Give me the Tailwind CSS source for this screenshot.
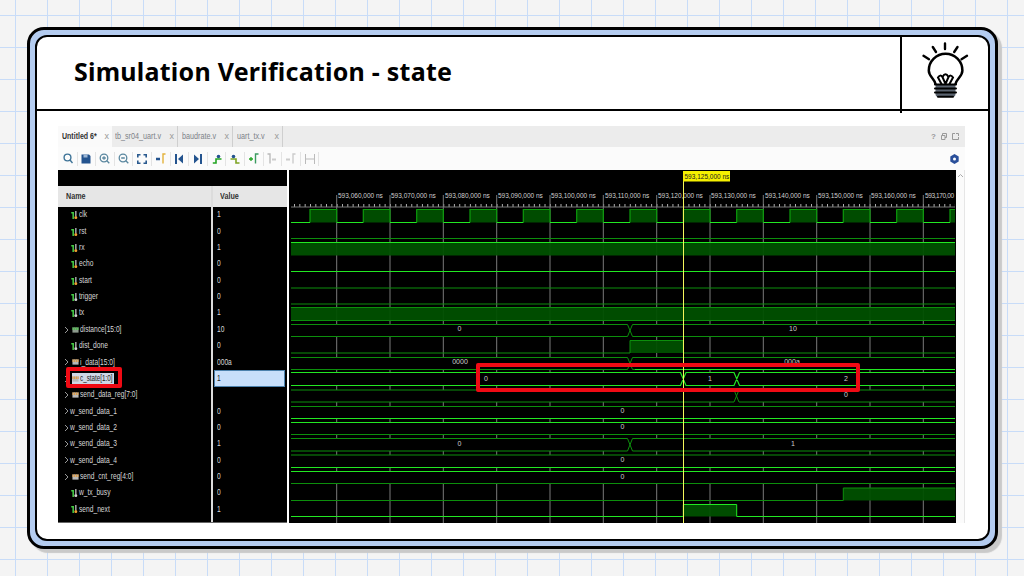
<!DOCTYPE html>
<html>
<head>
<meta charset="utf-8">
<script src="https://cdn.jsdelivr.net/npm/@tailwindcss/browser@4"></script>
</head>
<body class="m-0">
<svg width="0" height="0" class="absolute">
  <defs>
    <symbol id="in" viewBox="0 0 8 10"><path d="M0.3 2.5H2.5V9.5" fill="none" stroke="#46d046" stroke-width="1.7"/><path d="M5.5 0.5V7" stroke="#a8a8a8" stroke-width="1.7"/><circle cx="5.5" cy="8" r="1.7" fill="#f0a030"/></symbol>
    <symbol id="out" viewBox="0 0 8 10"><path d="M0.3 2.5H2.5V9.5" fill="none" stroke="#46d046" stroke-width="1.7"/><path d="M5.5 0.5V7" stroke="#a8a8a8" stroke-width="1.7"/><circle cx="5.5" cy="8" r="1.7" fill="#d0d0d0"/></symbol>
    <symbol id="busg" viewBox="0 0 8 8"><rect x="0.5" y="1" width="7" height="6" fill="#8c9a8c"/><path d="M1 1V4M3 1V4M5 1V4M7 1V4" stroke="#3fc43f" stroke-width="1"/></symbol>
    <symbol id="buso" viewBox="0 0 8 8"><rect x="0.5" y="1" width="7" height="6" fill="#b8b8b8"/><path d="M1 1V4M3 1V4M5 1V4M7 1V4" stroke="#e8962c" stroke-width="1"/></symbol>
  </defs>
</svg>

<div class="relative w-[1024px] h-[576px] overflow-hidden bg-[#f4f4f4] bg-[linear-gradient(#c8dcf8_1px,transparent_1px),linear-gradient(90deg,#c8dcf8_1px,transparent_1px)] bg-[size:32px_32px] bg-[position:15px_15px] pt-[27px] pl-[27px] font-['Liberation_Sans',sans-serif]">

  <!-- card -->
  <div class="w-[971px] h-[522px] rounded-[17px] border-[3px] border-black bg-[#b4ccf0] p-[5px] shadow-[4px_4px_1px_#c9c9c9]">
    <div class="w-full h-full rounded-[12px] border-2 border-black bg-white flex flex-col overflow-hidden">

      <!-- title bar -->
      <div class="relative flex h-[74px] shrink-0 border-b-2 border-black">
        <div class="flex-1 pl-[37px] pt-[16px] text-[25px] leading-[36px] font-bold text-black font-['Noto_Sans',sans-serif] tracking-[0.24px]">Simulation Verification - state</div>
        <div class="w-[88px] shrink-0 border-l-2 border-black flex items-start justify-center pt-[3px]">
          <svg width="50" height="64" viewBox="920 40 50 64" fill="none" stroke="#000" stroke-linecap="round">
            <path d="M945 43.5V49M932.8 47L936 52M957.5 47L954.2 52M923.5 55.8L929 59.2M967 55.8L961.5 59.2" stroke-width="2.4"/>
            <path d="M935.5 84C934 78 928.8 76.5 928.8 70.5A16.8 16.8 0 0 1 962.4 70.5C962.4 76.5 957 78 955.5 84" stroke-width="2.5"/>
            <path d="M941.5 84L938 77.5Q940 74 942.5 77L945.5 84L948.5 77Q951 74 953 77.5L949.5 84M942.5 77Q945.5 71.5 948.5 77" stroke-width="2"/>
            <rect x="935.5" y="84" width="20" height="13" rx="3" fill="#5b6470" stroke="none"/>
            <path d="M935 84.5H956M935 88.5H956M935 92.5H956M938 96.8H953" stroke-width="2"/>
          </svg>
        </div>
        <div class="absolute left-[863px] bottom-[-4px] w-[2px] h-[4px] bg-black"></div>
      </div>

      <!-- content -->
      <div class="pl-[21px] pt-[15px]">
        <div class="w-[907px] h-[397px] flex flex-col bg-[#fbfbfb]">

          <!-- tabs -->
          <div class="flex items-stretch h-[21px] shrink-0 bg-[#ececec] text-[9px] text-[#7c8288]">
            <div class="w-[54px] bg-[#fafafa] flex items-center justify-between pl-[4px] pr-[3px] font-bold text-[#333]"><span class="text-[#999] text-[9px] leading-none font-normal order-2">x</span><span class="inline-block origin-left scale-x-[0.78] w-[36px] whitespace-nowrap">Untitled 6*</span></div>
            <div class="w-[66px] pl-[3px] flex items-center justify-between border-r border-[#cfcfcf] pr-[3px]"><span class="text-[#999] text-[9px] leading-none order-2">x</span><span class="inline-block origin-left scale-x-[0.8] w-[50px] whitespace-nowrap">tb_sr04_uart.v</span></div>
            <div class="w-[55px] pl-[4px] flex items-center justify-between border-r border-[#cfcfcf] pr-[3px]"><span class="text-[#999] text-[9px] leading-none order-2">x</span><span class="inline-block origin-left scale-x-[0.8] w-[38px] whitespace-nowrap">baudrate.v</span></div>
            <div class="w-[50px] pl-[4px] flex items-center justify-between border-r border-[#cfcfcf] pr-[3px]"><span class="text-[#999] text-[9px] leading-none order-2">x</span><span class="inline-block origin-left scale-x-[0.8] w-[30px] whitespace-nowrap">uart_tx.v</span></div>
            <div class="flex-1"></div>
            <div class="flex items-center gap-[5px] pr-[6px] text-[#999]">
              <span class="text-[8px] font-bold leading-none">?</span>
              <svg width="6" height="7" viewBox="0 0 6 7" fill="none" stroke="#999"><path d="M1.5 2.5V.5H5.5V4.5H4M.5 2.5H4V6.5H.5Z"/></svg>
              <svg width="7" height="7" viewBox="0 0 7 7" fill="none" stroke="#999"><path d="M3 .5H.5V6.5H6.5V4M4 .5H6.5V3"/></svg>
            </div>
          </div>

          <!-- toolbar -->
          <div class="flex items-center h-[23px] shrink-0 bg-[#fbfbfb] pl-[1px] pr-[6px]">
            <div class="w-[18.6px] h-[14px] flex items-center justify-center border-r border-[#e4e4e4]"><svg width="10" height="11" viewBox="0 0 10 11" fill="none" stroke="#3f7498" stroke-width="1.4"><circle cx="4.5" cy="4.5" r="3.4"/><path d="M7 7L9.5 10"/></svg></div>
            <div class="w-[18.6px] h-[14px] flex items-center justify-center border-r border-[#e4e4e4]"><svg width="10" height="10" viewBox="0 0 10 10"><path d="M.5.5H8L9.5 2V9.5H.5Z" fill="#24548f"/><rect x="2.5" y=".5" width="4" height="3" fill="#9db7d6"/></svg></div>
            <div class="w-[18.6px] h-[14px] flex items-center justify-center border-r border-[#e4e4e4]"><svg width="11" height="11" viewBox="0 0 11 11" fill="none" stroke="#5a879f" stroke-width="1.3"><circle cx="5" cy="5" r="3.8"/><path d="M7.8 7.8L10.3 10.3M3.2 5H6.8M5 3.2V6.8"/></svg></div>
            <div class="w-[18.6px] h-[14px] flex items-center justify-center border-r border-[#e4e4e4]"><svg width="11" height="11" viewBox="0 0 11 11" fill="none" stroke="#5a879f" stroke-width="1.3"><circle cx="5" cy="5" r="3.8"/><path d="M7.8 7.8L10.3 10.3M3.2 5H6.8"/></svg></div>
            <div class="w-[18.6px] h-[14px] flex items-center justify-center border-r border-[#e4e4e4]"><svg width="10" height="10" viewBox="0 0 10 10" fill="none" stroke="#2a5a8f" stroke-width="1.6"><path d="M.8 3.5V.8H3.5M6.5.8H9.2V3.5M.8 6.5V9.2H3.5M6.5 9.2H9.2V6.5"/></svg></div>
            <div class="w-[18.6px] h-[14px] flex items-center justify-center border-r border-[#e4e4e4]"><svg width="10" height="11" viewBox="0 0 10 11" fill="none"><path d="M0 6H4" stroke="#24548f" stroke-width="2.4"/><path d="M9.5 1H7V10.5" stroke="#e3b23c" stroke-width="1.4"/></svg></div>
            <div class="w-[18.6px] h-[14px] flex items-center justify-center border-r border-[#e4e4e4]"><svg width="8" height="10" viewBox="0 0 8 10"><rect x="0" y="0" width="2" height="10" fill="#24548f"/><path d="M8 .5V9.5L3 5Z" fill="#24548f"/></svg></div>
            <div class="w-[18.6px] h-[14px] flex items-center justify-center border-r border-[#e4e4e4]"><svg width="8" height="10" viewBox="0 0 8 10"><rect x="6" y="0" width="2" height="10" fill="#24548f"/><path d="M0 .5V9.5L5 5Z" fill="#24548f"/></svg></div>
            <div class="w-[18.6px] h-[14px] flex items-center justify-center border-r border-[#e4e4e4]"><svg width="10" height="10" viewBox="0 0 10 10" fill="none"><path d="M.8 9H4V5H9.5" stroke="#22a522" stroke-width="1.6"/><circle cx="6.5" cy="2.5" r="1.8" fill="#24548f"/></svg></div>
            <div class="w-[18.6px] h-[14px] flex items-center justify-center border-r border-[#e4e4e4]"><svg width="10" height="10" viewBox="0 0 10 10" fill="none"><path d="M.5 5H6V9H9.5" stroke="#7ea422" stroke-width="1.6"/><circle cx="3.5" cy="2.5" r="1.8" fill="#24548f"/></svg></div>
            <div class="w-[18.6px] h-[14px] flex items-center justify-center border-r border-[#e4e4e4]"><svg width="10" height="11" viewBox="0 0 10 11" fill="none"><path d="M0 6H4M2 4V8" stroke="#22a522" stroke-width="1.3"/><path d="M9.5 1H6.5V10.5" stroke="#3a9a60" stroke-width="1.4"/></svg></div>
            <div class="w-[18.6px] h-[14px] flex items-center justify-center border-r border-[#e4e4e4]"><svg width="10" height="11" viewBox="0 0 10 11" fill="none"><path d="M.5 1H3V10.5" stroke="#bbb" stroke-width="1.4"/><path d="M5 6.5H9" stroke="#ccc" stroke-width="2"/></svg></div>
            <div class="w-[18.6px] h-[14px] flex items-center justify-center border-r border-[#e4e4e4]"><svg width="10" height="11" viewBox="0 0 10 11" fill="none"><path d="M9.5 1H7V10.5" stroke="#ccc" stroke-width="1.4"/><path d="M0 6.5H4" stroke="#ccc" stroke-width="2"/></svg></div>
            <div class="w-[18.6px] h-[14px] flex items-center justify-center border-r border-[#e4e4e4]"><svg width="10" height="10" viewBox="0 0 10 10" fill="none" stroke="#bbb"><path d="M.5 0V10M9.5 0V10M1 5H9"/></svg></div>
            <div class="flex-1"></div>
            <svg width="9" height="10" viewBox="0 0 9 10"><path d="M4.5 0L8.7 2.5V7.5L4.5 10L.3 7.5V2.5Z" fill="#2a4f9a"/><circle cx="4.5" cy="5" r="1.5" fill="#fff"/></svg>
          </div>

          <!-- wave window -->
          <div class="flex flex-1 min-h-0 bg-black">
            <!-- name + value -->
            <div class="w-[229px] shrink-0 flex flex-col border-b border-[#666]">
              <div class="h-[16px] shrink-0"></div>
              <div class="flex flex-1 min-h-0">
                <div class="w-[153px] shrink-0 flex flex-col text-[9px] text-[#d8d8d8] whitespace-nowrap">
                  <div class="h-[21px] shrink-0 bg-[#e6e6e6] flex items-center pl-[8px] font-bold text-[#333]"><span class="inline-block origin-left scale-x-[0.8]">Name</span></div>
                  <div class="h-[16.35px] flex items-center pl-[13px] gap-[1px]"><svg width="7" height="10"><use href="#in"/></svg><span class="inline-block origin-left scale-x-[0.74]">clk</span></div>
                  <div class="h-[16.35px] flex items-center pl-[13px] gap-[1px]"><svg width="7" height="10"><use href="#in"/></svg><span class="inline-block origin-left scale-x-[0.74]">rst</span></div>
                  <div class="h-[16.35px] flex items-center pl-[13px] gap-[1px]"><svg width="7" height="10"><use href="#in"/></svg><span class="inline-block origin-left scale-x-[0.74]">rx</span></div>
                  <div class="h-[16.35px] flex items-center pl-[13px] gap-[1px]"><svg width="7" height="10"><use href="#in"/></svg><span class="inline-block origin-left scale-x-[0.74]">echo</span></div>
                  <div class="h-[16.35px] flex items-center pl-[13px] gap-[1px]"><svg width="7" height="10"><use href="#in"/></svg><span class="inline-block origin-left scale-x-[0.74]">start</span></div>
                  <div class="h-[16.35px] flex items-center pl-[13px] gap-[1px]"><svg width="7" height="10"><use href="#out"/></svg><span class="inline-block origin-left scale-x-[0.74]">trigger</span></div>
                  <div class="h-[16.35px] flex items-center pl-[13px] gap-[1px]"><svg width="7" height="10"><use href="#out"/></svg><span class="inline-block origin-left scale-x-[0.74]">tx</span></div>
                  <div class="h-[16.35px] flex items-center pl-[5px] gap-[1px]"><svg width="7" height="8" viewBox="0 0 7 8" fill="none" stroke="#999" stroke-width="1"><path d="M2 1L5 4L2 7"/></svg><svg width="7" height="8" class="ml-[1px]"><use href="#busg"/></svg><span class="inline-block origin-left scale-x-[0.74]">distance[15:0]</span></div>
                  <div class="h-[16.35px] flex items-center pl-[13px] gap-[1px]"><svg width="7" height="10"><use href="#out"/></svg><span class="inline-block origin-left scale-x-[0.74]">dist_done</span></div>
                  <div class="h-[16.35px] flex items-center pl-[5px] gap-[1px]"><svg width="7" height="8" viewBox="0 0 7 8" fill="none" stroke="#999" stroke-width="1"><path d="M2 1L5 4L2 7"/></svg><svg width="7" height="8" class="ml-[1px]"><use href="#buso"/></svg><span class="inline-block origin-left scale-x-[0.74]">i_data[15:0]</span></div>
                  <div class="h-[16.35px] flex items-center pl-[5px] gap-[1px]"><svg width="7" height="8" viewBox="0 0 7 8" fill="none" stroke="#999" stroke-width="1"><path d="M2 1L5 4L2 7"/></svg><div class="ml-[1px] flex items-center gap-[1px] h-[12px] w-[42px] bg-[#cfd8e6] text-[#222]"><svg width="7" height="8" class="shrink-0"><use href="#buso"/></svg><span class="inline-block origin-left scale-x-[0.7]">c_state[1:0]</span></div></div>
                  <div class="h-[16.35px] flex items-center pl-[5px] gap-[1px]"><svg width="7" height="8" viewBox="0 0 7 8" fill="none" stroke="#999" stroke-width="1"><path d="M2 1L5 4L2 7"/></svg><svg width="7" height="8" class="ml-[1px]"><use href="#buso"/></svg><span class="inline-block origin-left scale-x-[0.74]">send_data_reg[7:0]</span></div>
                  <div class="h-[16.35px] flex items-center pl-[5px]"><svg width="7" height="8" viewBox="0 0 7 8" fill="none" stroke="#999" stroke-width="1"><path d="M2 1L5 4L2 7"/></svg><span class="inline-block origin-left scale-x-[0.74]">w_send_data_1</span></div>
                  <div class="h-[16.35px] flex items-center pl-[5px]"><svg width="7" height="8" viewBox="0 0 7 8" fill="none" stroke="#999" stroke-width="1"><path d="M2 1L5 4L2 7"/></svg><span class="inline-block origin-left scale-x-[0.74]">w_send_data_2</span></div>
                  <div class="h-[16.35px] flex items-center pl-[5px]"><svg width="7" height="8" viewBox="0 0 7 8" fill="none" stroke="#999" stroke-width="1"><path d="M2 1L5 4L2 7"/></svg><span class="inline-block origin-left scale-x-[0.74]">w_send_data_3</span></div>
                  <div class="h-[16.35px] flex items-center pl-[5px]"><svg width="7" height="8" viewBox="0 0 7 8" fill="none" stroke="#999" stroke-width="1"><path d="M2 1L5 4L2 7"/></svg><span class="inline-block origin-left scale-x-[0.74]">w_send_data_4</span></div>
                  <div class="h-[16.35px] flex items-center pl-[5px] gap-[1px]"><svg width="7" height="8" viewBox="0 0 7 8" fill="none" stroke="#999" stroke-width="1"><path d="M2 1L5 4L2 7"/></svg><svg width="7" height="8" class="ml-[1px]"><use href="#buso"/></svg><span class="inline-block origin-left scale-x-[0.74]">send_cnt_reg[4:0]</span></div>
                  <div class="h-[16.35px] flex items-center pl-[13px] gap-[1px]"><svg width="7" height="10"><use href="#out"/></svg><span class="inline-block origin-left scale-x-[0.74]">w_tx_busy</span></div>
                  <div class="h-[16.35px] flex items-center pl-[13px] gap-[1px]"><svg width="7" height="10"><use href="#in"/></svg><span class="inline-block origin-left scale-x-[0.74]">send_next</span></div>
                </div>
                <div class="w-[2px] shrink-0 bg-[#dcdcdc]"></div>
                <div class="flex-1 flex flex-col text-[9px] text-[#d8d8d8]">
                  <div class="h-[21px] shrink-0 bg-[#e6e6e6] flex items-center pl-[7px] font-bold text-[#333]"><span class="inline-block origin-left scale-x-[0.8]">Value</span></div>
                  <div class="h-[16.35px] flex items-center pl-[4px]"><span class="inline-block origin-left scale-x-[0.74]">1</span></div>
                  <div class="h-[16.35px] flex items-center pl-[4px]"><span class="inline-block origin-left scale-x-[0.74]">0</span></div>
                  <div class="h-[16.35px] flex items-center pl-[4px]"><span class="inline-block origin-left scale-x-[0.74]">1</span></div>
                  <div class="h-[16.35px] flex items-center pl-[4px]"><span class="inline-block origin-left scale-x-[0.74]">0</span></div>
                  <div class="h-[16.35px] flex items-center pl-[4px]"><span class="inline-block origin-left scale-x-[0.74]">0</span></div>
                  <div class="h-[16.35px] flex items-center pl-[4px]"><span class="inline-block origin-left scale-x-[0.74]">0</span></div>
                  <div class="h-[16.35px] flex items-center pl-[4px]"><span class="inline-block origin-left scale-x-[0.74]">1</span></div>
                  <div class="h-[16.35px] flex items-center pl-[4px]"><span class="inline-block origin-left scale-x-[0.74]">10</span></div>
                  <div class="h-[16.35px] flex items-center pl-[4px]"><span class="inline-block origin-left scale-x-[0.74]">0</span></div>
                  <div class="h-[16.35px] flex items-center pl-[4px]"><span class="inline-block origin-left scale-x-[0.74]">000a</span></div>
                  <div class="h-[16.35px] flex items-center ml-[1px] mr-[2px] pl-[2px] bg-[#c8dffa] border border-[#4d82ad] text-[#222]"><span class="inline-block origin-left scale-x-[0.74]">1</span></div>
                  <div class="h-[16.35px]"></div>
                  <div class="h-[16.35px] flex items-center pl-[4px]"><span class="inline-block origin-left scale-x-[0.74]">0</span></div>
                  <div class="h-[16.35px] flex items-center pl-[4px]"><span class="inline-block origin-left scale-x-[0.74]">0</span></div>
                  <div class="h-[16.35px] flex items-center pl-[4px]"><span class="inline-block origin-left scale-x-[0.74]">1</span></div>
                  <div class="h-[16.35px] flex items-center pl-[4px]"><span class="inline-block origin-left scale-x-[0.74]">0</span></div>
                  <div class="h-[16.35px] flex items-center pl-[4px]"><span class="inline-block origin-left scale-x-[0.74]">0</span></div>
                  <div class="h-[16.35px] flex items-center pl-[4px]"><span class="inline-block origin-left scale-x-[0.74]">0</span></div>
                  <div class="h-[16.35px] flex items-center pl-[4px]"><span class="inline-block origin-left scale-x-[0.74]">1</span></div>
                </div>
              </div>
            </div>
            <div class="w-[2px] shrink-0 bg-white"></div>
            <!-- waves -->
            <svg width="667" height="353" viewBox="289 170 667 353" class="shrink-0 block font-['Liberation_Sans',sans-serif]" fill="none">
              <rect x="289" y="170" width="667" height="353" fill="#000"/>
              <!-- ticks -->
              <line x1="294" y1="205.5" x2="955" y2="205.5" stroke="#b0b0b0" stroke-width="3" stroke-dasharray="1 4.33"/>
              <line x1="291" y1="207" x2="955" y2="207" stroke="#777" stroke-width="1"/>
              <!-- grid -->
              <path d="M336.7 195V523M390 195V523M443.3 195V523M496.7 195V523M550 195V523M603.3 195V523M656.7 195V523M710 195V523M763.3 195V523M816.7 195V523M870 195V523M923.3 195V523" stroke="#7a7a7a" stroke-width="1"/>
              <!-- time labels -->
              <g fill="#cfcfcf" font-size="6.5">
                <text x="338" y="198">593,060,000 ns</text>
                <text x="391" y="198">593,070,000 ns</text>
                <text x="445" y="198">593,080,000 ns</text>
                <text x="498" y="198">593,090,000 ns</text>
                <text x="551" y="198">593,100,000 ns</text>
                <text x="605" y="198">593,110,000 ns</text>
                <text x="658" y="198">593,120,000 ns</text>
                <text x="711" y="198">593,130,000 ns</text>
                <text x="765" y="198">593,140,000 ns</text>
                <text x="818" y="198">593,150,000 ns</text>
                <text x="871" y="198">593,160,000 ns</text>
                <text x="925" y="198" textLength="29">593,170,00</text>
              </g>
              <!-- bus row masks -->
              <g fill="#000">
                <rect x="291" y="324.5" width="664" height="12"/>
                <rect x="291" y="357.5" width="664" height="12"/>
                <rect x="291" y="373" width="664" height="12.5"/>
                <rect x="291" y="390" width="664" height="12"/>
                <rect x="291" y="406.5" width="664" height="12"/>
                <rect x="291" y="422.5" width="664" height="12"/>
                <rect x="291" y="438.5" width="664" height="12.5"/>
                <rect x="291" y="455" width="664" height="12.5"/>
                <rect x="291" y="471.5" width="664" height="12"/>
              </g>
              <!-- filled highs -->
              <g fill="#005000" fill-opacity="0.95">
                <rect x="310" y="209.5" width="26.7" height="13"/><rect x="363.3" y="209.5" width="26.7" height="13"/><rect x="416.7" y="209.5" width="26.6" height="13"/><rect x="470" y="209.5" width="26.7" height="13"/><rect x="523.3" y="209.5" width="26.7" height="13"/><rect x="576.7" y="209.5" width="26.6" height="13"/><rect x="630" y="209.5" width="26.7" height="13"/><rect x="683.3" y="209.5" width="26.7" height="13"/><rect x="736.7" y="209.5" width="26.6" height="13"/><rect x="790" y="209.5" width="26.7" height="13"/><rect x="843.3" y="209.5" width="26.7" height="13"/><rect x="896.7" y="209.5" width="26.6" height="13"/><rect x="950" y="209.5" width="5" height="13"/>
                <rect x="291" y="242.5" width="664" height="13"/>
                <rect x="291" y="307.5" width="664" height="13"/>
                <rect x="630" y="340.5" width="53.3" height="12.5"/>
                <rect x="843.3" y="488" width="112" height="12.5"/>
                <rect x="683.3" y="504.5" width="53.4" height="12"/>
              </g>
              <!-- clk -->
              <path d="M310 222.5V209.5H336.7V222.5M363.3 222.5V209.5H390V222.5M416.7 222.5V209.5H443.3V222.5M470 222.5V209.5H496.7V222.5M523.3 222.5V209.5H550V222.5M576.7 222.5V209.5H603.3V222.5M630 222.5V209.5H656.7V222.5M683.3 222.5V209.5H710V222.5M736.7 222.5V209.5H763.3V222.5M790 222.5V209.5H816.7V222.5M843.3 222.5V209.5H870V222.5M896.7 222.5V209.5H923.3V222.5M950 222.5V209.5H955" stroke="#0c9c0c" stroke-width="1.2"/>
              <path d="M291 222.5H310M336.7 222.5H363.3M390 222.5H416.7M443.3 222.5H470M496.7 222.5H523.3M550 222.5H576.7M603.3 222.5H630M656.7 222.5H683.3M710 222.5H736.7M763.3 222.5H790M816.7 222.5H843.3M870 222.5H896.7M923.3 222.5H950" stroke="#22e822" stroke-width="1"/>
              <!-- dim lines -->
              <path d="M291 238.5H955M291 288H955M291 304H955M291 307.5H955M291 320.5H955M291 353H630V340.5H683.3V353H955M291 500.5H843.3V488H955" stroke="#0c8f0c" stroke-width="1"/>
              <!-- bright lines -->
              <path d="M291 242.5H955M291 271.5H955M291 516.5H683.3V504.5H736.7V516.5H955" stroke="#22e822" stroke-width="1"/>
              <!-- buses dim -->
              <path d="M291 324.5H627.5L632.5 336.5H955M291 336.5H627.5L632.5 324.5H955" stroke="#0c8f0c" stroke-width="1"/>
              <path d="M291 357.5H627.5L632.5 369.5H635M291 369.5H627.5L632.5 357.5H955" stroke="#0c8f0c" stroke-width="1"/>
              <path d="M635 369.5H955" stroke="#22e822" stroke-width="1"/>
              <path d="M291 390H734L739 402H955M291 402H734L739 390H955" stroke="#0c8f0c" stroke-width="1"/>
              <path d="M291 406.5H955M291 434.5H955M291 451H627.5M632.5 451H955M291 438.5H627.5L632.5 451M627.5 451L632.5 438.5H955M291 455H955M291 483.5H955" stroke="#0c8f0c" stroke-width="1"/>
              <path d="M291 418.5H955M291 422.5H955M291 467.5H955M291 471.5H955" stroke="#22e822" stroke-width="1"/>
              <!-- c_state -->
              <path d="M291 372.5H680.5L686 385.5H734L739.5 372.5H955M291 385.5H680.5L686 372.5H734L739.5 385.5H955" stroke="#22e822" stroke-width="1.2"/>
              <!-- bus values -->
              <g fill="#cfcfcf" font-size="7" text-anchor="middle">
                <text x="459.5" y="331">0</text><text x="793" y="331">10</text>
                <text x="460" y="364">0000</text><text x="792" y="364">000a</text>
                <text x="486" y="380.5">0</text><text x="710" y="380.5">1</text><text x="846" y="380.5">2</text>
                <text x="846" y="397">0</text>
                <text x="622.5" y="413">0</text>
                <text x="622.5" y="429">0</text>
                <text x="459.5" y="446">0</text><text x="793" y="446">1</text>
                <text x="622.5" y="462">0</text>
                <text x="622.5" y="478.5">0</text>
              </g>
              <!-- cursor -->
              <line x1="683.5" y1="172" x2="683.5" y2="523" stroke="#f5f55a" stroke-width="1"/>
              <rect x="683" y="171" width="47" height="10.5" fill="#f5f000"/>
              <text x="684.5" y="178.8" font-size="6.5" fill="#222">593,125,000 ns</text>
            </svg>
            <!-- scrollbar -->
            <div class="w-[9px] shrink-0 bg-[#fbfbfb] border-r border-[#e6e6e6] flex justify-center pt-[3px] h-full">
              <svg width="7" height="5" viewBox="0 0 7 5" fill="none" stroke="#aaa"><path d="M1 4L3.5 1.5L6 4"/></svg>
            </div>
          </div>
        </div>
      </div>
    </div>
  </div>

  <!-- red highlight boxes -->
  <div class="absolute left-[66px] top-[367px] w-[56px] h-[21px] border-[4px] border-[#f00a14] rounded-[2px]"></div>
  <div class="absolute left-[476px] top-[363px] w-[384px] h-[29px] border-[4px] border-[#f00a14] rounded-[2px]"></div>
</div>
</body>
</html>
